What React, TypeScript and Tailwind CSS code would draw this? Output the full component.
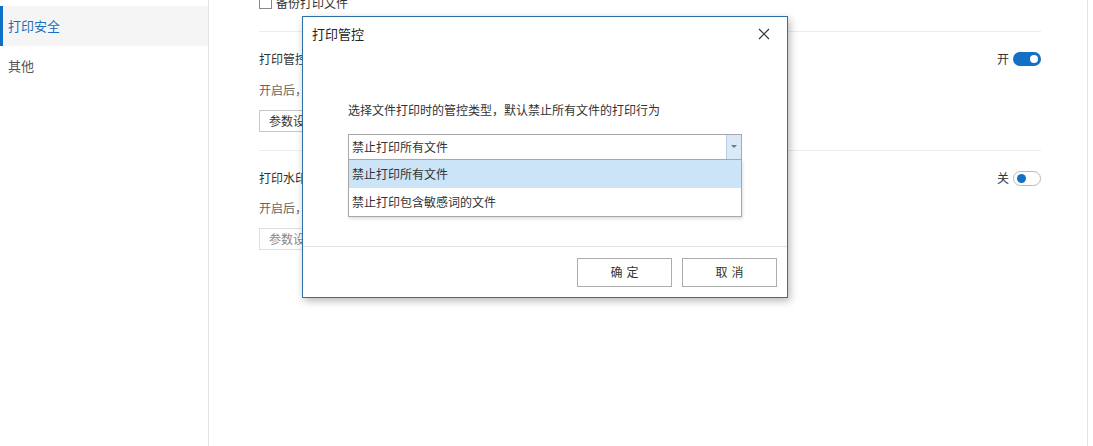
import React from "react";

const font = { fontFamily: '"Noto Sans CJK SC", "Noto Sans", sans-serif' };

function ToggleOn() {
  return (
    <div className="w-[28px] h-[14px] rounded-full bg-[#1470c4] flex items-center justify-end pr-[3px]">
      <div className="w-[8px] h-[8px] rounded-full bg-white" />
    </div>
  );
}
function ToggleOff() {
  return (
    <div className="w-[28px] h-[15px] rounded-full bg-white border border-[#b8b8b8] flex items-center pl-[3px]">
      <div className="w-[9px] h-[9px] rounded-full bg-[#1470c4]" />
    </div>
  );
}

export default function App() {
  return (
    <div
      className="relative w-[1093px] h-[446px] overflow-hidden bg-white flex text-[12px] text-[#333]"
      style={font}
    >
      {/* Sidebar */}
      <div className="w-[209px] h-full border-r border-[#e3e3e3] pt-[6px] shrink-0">
        <div className="h-[40px] bg-[#f5f5f5] flex items-center border-l-[3px] border-[#0f6fc6] pl-[5px] text-[13px] text-[#1a6fc0]">
          打印安全
        </div>
        <div className="h-[40px] flex items-center pl-[8px] text-[13px] text-[#555]">其他</div>
      </div>

      {/* Main */}
      <div className="w-[879px] h-full border-r border-[#e3e3e3] pl-[50px] pr-[46px]">
        <div className="-mt-[26px] h-[58px] flex items-center border-b border-[#ececec]">
          <div className="w-[13px] h-[13px] border border-[#888] bg-white mr-[4px]" />
          <span className="text-[12px] text-[#333]">备份打印文件</span>
        </div>
        <div className="h-[119px] border-b border-[#ececec] pt-[18px]">
          <div className="flex items-center justify-between h-[18px]">
            <span>打印管控</span>
            <div className="flex items-center gap-[4px]">
              <span>开</span>
              <ToggleOn />
            </div>
          </div>
          <div className="h-[18px] mt-[13px] flex items-center text-[#666]">开启后，</div>
          <div className="mt-[11px] w-[72px] h-[22px] border border-[#c8c8c8] flex items-center pl-[9px]">参数设置</div>
        </div>
        <div className="pt-[18px]">
          <div className="flex items-center justify-between h-[18px]">
            <span>打印水印</span>
            <div className="flex items-center gap-[4px]">
              <span>关</span>
              <ToggleOff />
            </div>
          </div>
          <div className="h-[18px] mt-[12px] flex items-center text-[#666]">开启后，</div>
          <div className="mt-[11px] w-[72px] h-[22px] border border-[#e0e0e0] flex items-center pl-[9px] text-[#888]">参数设置</div>
        </div>
      </div>

      {/* Modal */}
      <div className="absolute left-[302px] top-[16px] w-[486px] h-[282px] bg-white border border-[#2f6fa8] shadow-[2px_3px_8px_rgba(0,0,0,0.28)] flex flex-col">
        <div className="h-[33px] flex items-center justify-between pl-[9px] pr-[17px]">
          <span className="text-[13px] text-[#222] mt-[1px]">打印管控</span>
          <svg width="12" height="12" viewBox="0 0 12 12" className="mt-[1px]">
            <path d="M1 1 L11 11 M11 1 L1 11" stroke="#333" strokeWidth="1.2" fill="none" />
          </svg>
        </div>
        <div className="flex-1 pl-[45px] pt-[52px] border-b border-[#e3e3e3]">
          <div className="h-[16px] flex items-center text-[12px] text-[#333]">
            选择文件打印时的管控类型，默认禁止所有文件的打印行为
          </div>
          <div className="relative mt-[16px] w-[394px]">
            <div className="h-[26px] border border-[#a8a8a8] flex items-center justify-between">
              <span className="pl-[3px] text-[#333]">禁止打印所有文件</span>
              <div className="w-[15px] h-full bg-[#d9e9f8] border-l border-[#b8cde0] flex items-center justify-center">
                <svg width="6" height="4" viewBox="0 0 6 4">
                  <path d="M0 0 L6 0 L3 3 Z" fill="#777" />
                </svg>
              </div>
            </div>
            <div className="absolute left-0 top-[25px] w-[394px] bg-white border border-[#a8a8a8] shadow-[1px_2px_3px_rgba(0,0,0,0.12)]">
              <div className="h-[28px] bg-[#cce4f7] flex items-center pl-[3px] text-[#333]">禁止打印所有文件</div>
              <div className="h-[28px] flex items-center pl-[3px] text-[#333]">禁止打印包含敏感词的文件</div>
            </div>
          </div>
        </div>
        <div className="h-[50px] flex items-center justify-end gap-[10px] pr-[10px]">
          <button className="w-[95px] h-[29px] border border-[#adadad] bg-white text-[12px] text-[#333] tracking-[4px] pl-[4px]">确定</button>
          <button className="w-[95px] h-[29px] border border-[#adadad] bg-white text-[12px] text-[#333] tracking-[4px] pl-[4px]">取消</button>
        </div>
      </div>
    </div>
  );
}
